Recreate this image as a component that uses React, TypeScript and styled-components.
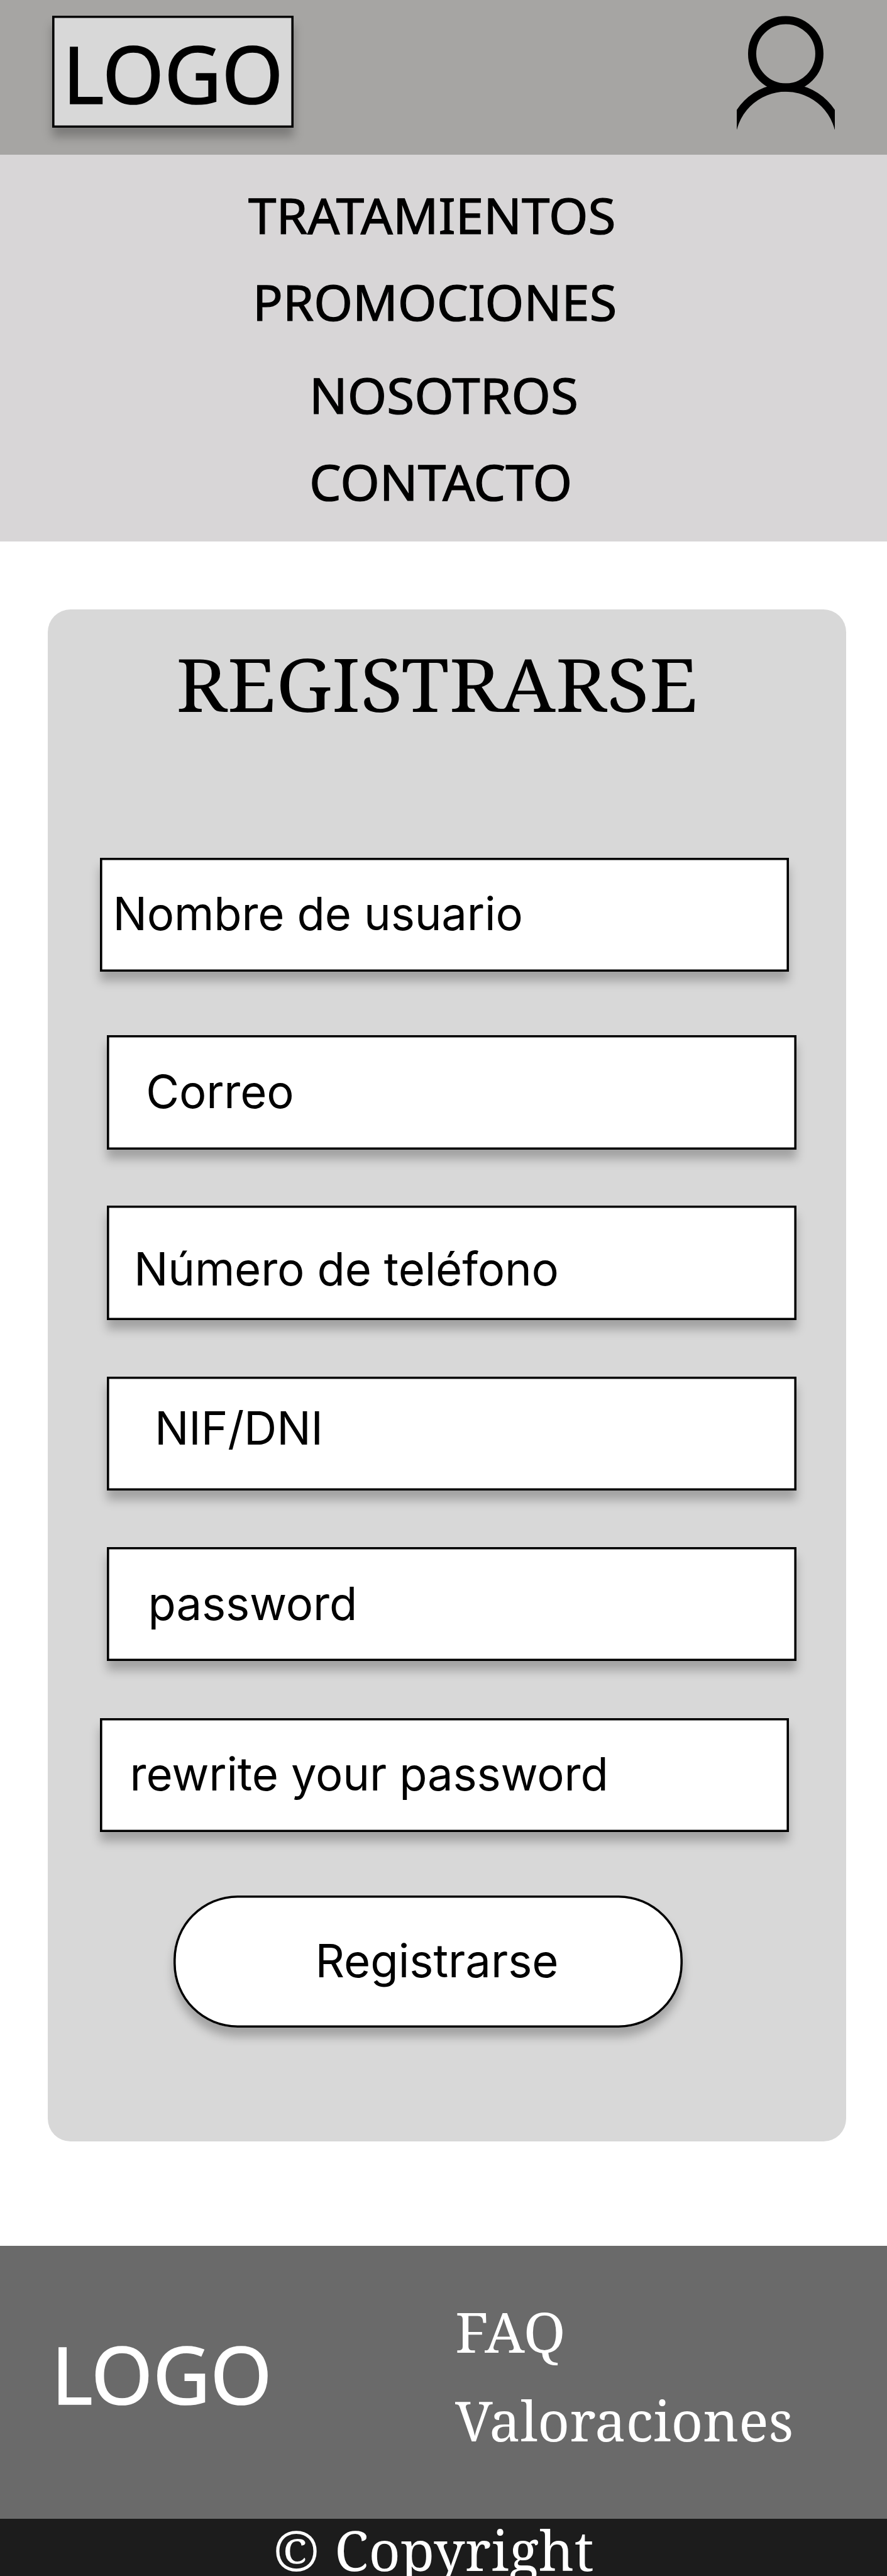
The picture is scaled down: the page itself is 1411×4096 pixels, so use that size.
import React from 'react';
import styled, { createGlobalStyle } from 'styled-components';

const GlobalStyle = createGlobalStyle`
  *, *::before, *::after { box-sizing: border-box; }
  html, body { margin: 0; padding: 0; background: #fff; }
  h1, p { margin: 0; padding: 0; font-weight: 400; }
`;

const sans = '"Noto Sans", "Open Sans", sans-serif';
const serif = '"Noto Serif", "DejaVu Serif", serif';
const ui = 'Inter, "Liberation Sans", sans-serif';

const outlined = `
  box-shadow: inset 0 0 0 3.6px #000, 0 14.5px 14.5px rgba(0, 0, 0, 0.25);
`;

const Page = styled.div`
  width: 1411px;
  height: 4096px;
  overflow: hidden;
  display: flex;
  flex-direction: column;
  background: #fff;
  color: #000;
`;

const Header = styled.header`
  flex: none;
  height: 246px;
  padding: 25.2px 83.4px 0 83.2px;
  display: flex;
  justify-content: space-between;
  align-items: flex-start;
  background: #a6a5a3;
`;

const LogoText = styled.span`
  font: 400 125.6px/150px ${sans};
  -webkit-text-stroke: 1.6px currentColor;
  white-space: nowrap;
`;

const LogoBox = styled.div`
  width: 383.6px;
  height: 177.7px;
  padding: 16.7px 0 0 16.6px;
  display: flex;
  align-items: flex-start;
  background: #d8d8d8;
  ${outlined}
`;

const UserIcon = styled.svg`
  display: block;
  width: 155.4px;
  height: 180.6px;
`;

const Nav = styled.nav`
  flex: none;
  height: 615.1px;
  padding-top: 46.3px;
  background: #d8d6d7;
`;

const NavItem = styled.a<{ $indent: number; $gap: number; $stretch: number }>`
  display: block;
  height: 100px;
  margin: 0 0 ${(p) => p.$gap}px ${(p) => p.$indent}px;
  font: 400 78.8px/100px ${sans};
  -webkit-text-stroke: 1.2px currentColor;
  transform: scaleX(${(p) => p.$stretch});
  transform-origin: left;
  white-space: nowrap;
`;

const Main = styled.main`
  flex: none;
  padding: 108.2px 0 166.2px 76px;
`;

const Card = styled.section`
  width: 1269.8px;
  height: 2435.4px;
  padding-top: 47.9px;
  border-radius: 36.2px;
  background: #d8d8d8;
`;

const Title = styled.h1`
  width: 800px;
  height: 140px;
  margin: 0 0 206.8px 203.8px;
  font: 400 117px/140px ${serif};
  transform: scaleX(1.062);
  transform-origin: left;
  white-space: nowrap;
`;

const Field = styled.div<{ $shifted?: boolean; $gap: number; $top: number; $indent: number }>`
  width: 1096.5px;
  height: 181.4px;
  margin: 0 0 ${(p) => p.$gap}px ${(p) => (p.$shifted ? 94.2 : 82.9)}px;
  padding: ${(p) => p.$top}px 0 0 ${(p) => p.$indent}px;
  background: #fff;
  font: 400 72.36px/88px ${ui};
  letter-spacing: -0.15px;
  white-space: nowrap;
  ${outlined}
`;

const Submit = styled.button`
  width: 810px;
  height: 210.1px;
  margin-left: 199.5px;
  padding: 60px 0 0 226.1px;
  display: flex;
  align-items: flex-start;
  border: 0;
  border-radius: 102px;
  background: #fff;
  color: #000;
  font: 400 72.36px/88px ${ui};
  white-space: nowrap;
  ${outlined}
`;

const Footer = styled.footer`
  flex: none;
  height: 434.3px;
  display: flex;
  align-items: flex-start;
  background: #6a6a6a;
  color: #fff;
`;

const FooterLogo = styled.div`
  display: flex;
  width: 723.6px;
  padding: 129.1px 0 0 81.8px;
`;

const FooterLinks = styled.div`
  display: flex;
  flex-direction: column;
  gap: 36.8px;
  padding-top: 84.5px;
`;

const FooterLink = styled.a<{ $stretch: number }>`
  font: 400 88px/104px ${serif};
  transform: scaleX(${(p) => p.$stretch});
  transform-origin: left;
  white-space: nowrap;
`;

const Copyright = styled.p`
  flex: none;
  height: 90.8px;
  && { padding-left: 434.5px; }
  background: #1c1c1c;
  color: #fff;
  font: 400 87.5px/98px ${serif};
  letter-spacing: 0.5px;
  white-space: nowrap;
`;

const navItems = [
  { label: 'TRATAMIENTOS', indent: 394.6, gap: 37.5, stretch: 1.016 },
  { label: 'PROMOCIONES', indent: 401.8, gap: 48.4, stretch: 1.005 },
  { label: 'NOSOTROS', indent: 492.1, gap: 37.5, stretch: 1.015 },
  { label: 'CONTACTO', indent: 491.9, gap: 0, stretch: 1.019 },
];

const fields = [
  { label: 'Nombre de usuario', shifted: false, gap: 100.8, top: 45.4, indent: 20.6 },
  { label: 'Correo', shifted: true, gap: 89.6, top: 45.8, indent: 62.0 },
  { label: 'Número de teléfono', shifted: true, gap: 90.4, top: 56.9, indent: 42.7 },
  { label: 'NIF/DNI', shifted: true, gap: 89.6, top: 38.3, indent: 75.8 },
  { label: 'password', shifted: true, gap: 90.3, top: 45.9, indent: 65.4 },
  { label: 'rewrite your password', shifted: false, gap: 100.8, top: 45.3, indent: 47.7 },
];

export default function App() {
  return (
    <>
      <GlobalStyle />
      <Page>
        <Header>
          <LogoBox>
            <LogoText>LOGO</LogoText>
          </LogoBox>
          <UserIcon viewBox="0 0 179 208" fill="none" stroke="#000" strokeWidth="15">
            <circle cx="89.8" cy="69.7" r="61.6" />
            <circle cx="89.8" cy="231.6" r="100" />
          </UserIcon>
        </Header>
        <Nav>
          {navItems.map((item) => (
            <NavItem key={item.label} $indent={item.indent} $gap={item.gap} $stretch={item.stretch}>
              {item.label}
            </NavItem>
          ))}
        </Nav>
        <Main>
          <Card>
            <Title>REGISTRARSE</Title>
            {fields.map((f) => (
              <Field key={f.label} $shifted={f.shifted} $gap={f.gap} $top={f.top} $indent={f.indent}>
                {f.label}
              </Field>
            ))}
            <Submit>Registrarse</Submit>
          </Card>
        </Main>
        <Footer>
          <FooterLogo>
            <LogoText>LOGO</LogoText>
          </FooterLogo>
          <FooterLinks>
            <FooterLink $stretch={1.025}>FAQ</FooterLink>
            <FooterLink $stretch={1.003}>Valoraciones</FooterLink>
          </FooterLinks>
        </Footer>
        <Copyright>© Copyright</Copyright>
      </Page>
    </>
  );
}
